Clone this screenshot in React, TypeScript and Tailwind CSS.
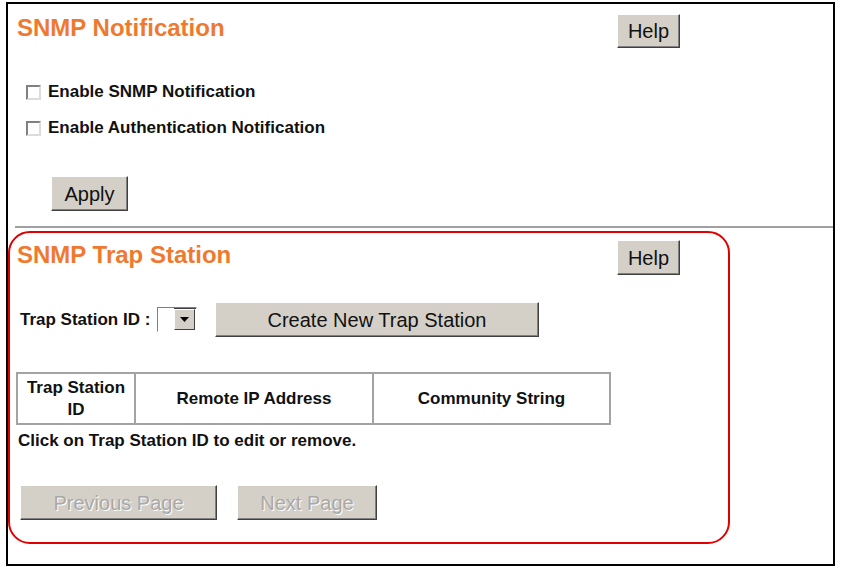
import React from 'react';

function WinButton({ label, className, disabled }: { label: string; className: string; disabled?: boolean }) {
  return (
    <button
      className={
        'flex items-center justify-center bg-[#d4d0c8] border border-t-white border-l-white border-r-[#404040] border-b-[#404040] shadow-[inset_-1px_-1px_0_#808080] text-[20px] leading-none ' +
        (disabled ? 'text-[#a8a8a8] [text-shadow:1px_1px_0_#ffffff]' : 'text-[#111]') +
        ' ' +
        className
      }
    >
      {label}
    </button>
  );
}

function CheckRow({ label }: { label: string }) {
  return (
    <div className="flex items-center h-[36px] pl-[18px] gap-[7px]">
      <span className="w-[15px] h-[15px] bg-white border-2 border-t-[#808080] border-l-[#808080] border-r-[#dcdcdc] border-b-[#dcdcdc]" />
      <span className="text-[17px] font-bold text-[#111]">{label}</span>
    </div>
  );
}

function SectionTitle({ text }: { text: string }) {
  return <div className="text-[24px] leading-[28px] font-bold text-[#ef7a2f]">{text}</div>;
}

export default function App() {
  return (
    <div className="w-[843px] h-[570px] bg-white pt-[2px] pl-[6px]" style={{ fontFamily: '"Liberation Sans", Arial, sans-serif' }}>
      <div className="w-[829px] h-[564px] border-2 border-black flex flex-col">
        {/* SNMP Notification */}
        <div className="flex items-start mt-[10px]">
          <div className="w-[609px] pl-[9px]">
            <SectionTitle text="SNMP Notification" />
          </div>
          <WinButton label="Help" className="w-[63px] h-[34px]" />
        </div>

        <div className="mt-[26px]">
          <CheckRow label="Enable SNMP Notification" />
          <CheckRow label="Enable Authentication Notification" />
        </div>

        <div className="mt-[30px] pl-[43px]">
          <WinButton label="Apply" className="w-[77px] h-[35px]" />
        </div>

        <div className="mt-[15px] ml-[7px] h-[2px] bg-[#a0a0a0]" />

        {/* SNMP Trap Station */}
        <div className="mt-[3px] w-[722px] h-[313px] border-2 border-[#e00000] rounded-[22px] flex flex-col">
          <div className="flex items-start mt-[7px]">
            <div className="w-[607px] pl-[7px] pt-[1px]">
              <SectionTitle text="SNMP Trap Station" />
            </div>
            <WinButton label="Help" className="w-[63px] h-[35px]" />
          </div>

          <div className="flex items-center mt-[27px] pl-[10px] h-[35px]">
            <span className="text-[17px] font-bold text-[#111] w-[137px]">Trap Station ID :</span>
            <div className="flex w-[40px] h-[25px] border border-t-[#808080] border-l-[#808080] border-r-white border-b-white shadow-[inset_1px_1px_0_#404040]">
              <div className="flex-1 bg-white" />
              <div className="w-[21px] my-[1px] mr-[1px] flex items-center justify-center bg-[#d4d0c8] border border-t-white border-l-white border-r-[#404040] border-b-[#404040]">
                <svg width="9" height="5" viewBox="0 0 9 5">
                  <path d="M0 0H9L4.5 5Z" fill="#000" />
                </svg>
              </div>
            </div>
            <WinButton label="Create New Trap Station" className="ml-[18px] w-[324px] h-[35px]" />
          </div>

          <table className="mt-[35px] ml-[6px] w-[595px] h-[53px] border-collapse border-2 border-[#a3a3a3] text-[17px] font-bold text-[#111] leading-[22px]">
            <thead>
              <tr>
                <th className="w-[118px] border-2 border-[#a3a3a3] font-bold">
                  Trap Station
                  <br />
                  ID
                </th>
                <th className="w-[238px] border-2 border-[#a3a3a3] font-bold">Remote IP Address</th>
                <th className="border-2 border-[#a3a3a3] font-bold">Community String</th>
              </tr>
            </thead>
          </table>

          <div className="mt-[5px] pl-[8px] text-[17px] font-bold leading-[22px] text-[#111]">
            Click on Trap Station ID to edit or remove.
          </div>

          <div className="flex mt-[33px] pl-[10px] gap-[20px]">
            <WinButton label="Previous Page" className="w-[197px] h-[35px]" disabled />
            <WinButton label="Next Page" className="w-[140px] h-[35px]" disabled />
          </div>
        </div>
      </div>
    </div>
  );
}
